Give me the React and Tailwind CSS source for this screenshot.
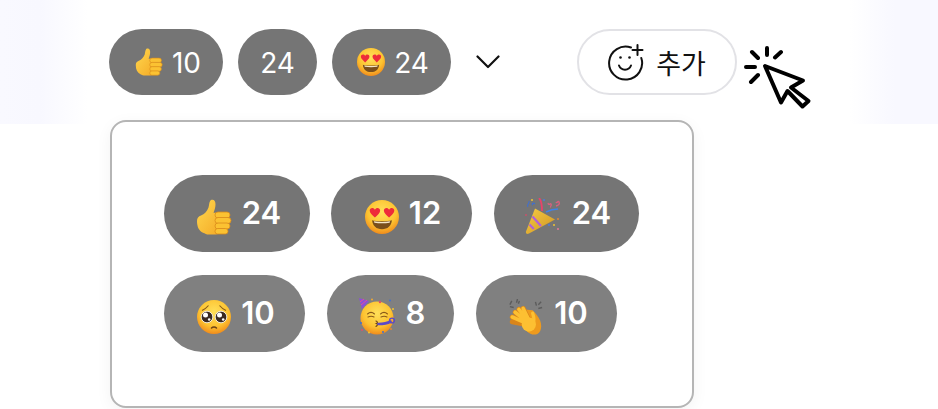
import React from "react";

function FaceGrad({ id }) {
  return (
    <radialGradient id={id} cx="50%" cy="35%" r="65%">
      <stop offset="0%" stopColor="#ffe05a" />
      <stop offset="65%" stopColor="#fdc331" />
      <stop offset="100%" stopColor="#f08c1c" />
    </radialGradient>
  );
}

function Thumb({ size }) {
  return (
    <svg width={size} height={size} viewBox="0 0 36 36">
      <defs>
        <linearGradient id="th" x1="0" y1="0" x2="1" y2="1">
          <stop offset="0%" stopColor="#ffd84f" />
          <stop offset="100%" stopColor="#f4a925" />
        </linearGradient>
      </defs>
      <path d="M1 22c0-3 1.500-4.500 4-5.500 3.500-1.500 6-4 7.500-8 .8-2.300.6-7 3-7.700 2.700-.6 4 1.500 4 4.500 0 3-1 6-2 8.500h6c2 0 3 1.700 2 3.500l-1 15c-.8 2.500-2.500 3.200-5 3.200H13c-2.500 0-4-1-6-1.800C3 32 1 28 1 22z" fill="url(#th)" />
      <rect x="19" y="13" width="15" height="6" rx="3" fill="#fbc232" stroke="#d98a1a" strokeWidth=".8" />
      <rect x="19" y="18.500" width="16" height="6" rx="3" fill="#fbc232" stroke="#d98a1a" strokeWidth=".8" />
      <rect x="19" y="24" width="15" height="6" rx="3" fill="#fbc232" stroke="#d98a1a" strokeWidth=".8" />
      <rect x="19" y="29.500" width="13" height="5.500" rx="2.700" fill="#fbc232" stroke="#d98a1a" strokeWidth=".8" />
    </svg>
  );
}

function Heart({ x, y, s }) {
  return (
    <path
      transform={`translate(${x} ${y}) scale(${s})`}
      d="M0 -3.500C-1.500 -6.500 -6 -6 -6 -2.300 -6 .5 -2.500 3 0 5.500 2.500 3 6 .5 6 -2.300 6 -6 1.500 -6.500 0 -3.500z"
      fill="#ee2b3a"
    />
  );
}

function HeartEyes({ size }) {
  return (
    <svg width={size} height={size} viewBox="0 0 36 36">
      <defs><FaceGrad id="he" /></defs>
      <circle cx="18" cy="18" r="18" fill="url(#he)" />
      <path d="M7.500 21.500C12 23 24 23 28.500 21.500 28 27.500 24 31 18 31S8 27.500 7.500 21.500z" fill="#7a4f1c" />
      <path d="M9.500 22.500c5 .9 12 .9 17 0l-.4 1.500c-5 .8-11 .8-16.200 0z" fill="#f4e6c8" />
      <Heart x={10.500} y={13.500} s={.92} />
      <Heart x={25.500} y={13.500} s={.92} />
    </svg>
  );
}

function Popper({ size }) {
  return (
    <svg width={size} height={size} viewBox="0 0 37 37" fill="none">
      <defs>
        <linearGradient id="po" x1="0" y1="0" x2="1" y2="1">
          <stop offset="0%" stopColor="#f6cc45" />
          <stop offset="100%" stopColor="#cf9421" />
        </linearGradient>
      </defs>
      <path d="M10 10.500 30 21.500 4 35.500C2 36.500.5 35.500 1 33.500z" fill="url(#po)" />
      <path d="M7.500 18.500 16 28M4.500 26.500 8.800 31" stroke="#b260d8" strokeWidth="2.200" />
      <path d="M3 9c-2-3 2-3 1-6M8 7c-2-1 0-3 2-1" stroke="#3f6fd1" strokeWidth="1.100" />
      <path d="M14 0c3 3 3 8 3 13" stroke="#e8436a" strokeWidth="1.800" />
      <path d="M23 5c1 3 2 0 3 1s-1 3 0 3M31 4c1 2 2-2 3 0s0 3-3 4" stroke="#d9607f" strokeWidth="1.400" />
      <path d="M21 14c4-2 7-3 12-3" stroke="#3f82e8" strokeWidth="1.600" />
      <circle cx="7" cy="2" r="1" fill="#f0c330" /><circle cx="19" cy="2" r="1" fill="#4a7ae0" />
      <circle cx="33" cy="21" r="1" fill="#e08a36" /><circle cx="29" cy="27" r="1" fill="#f0c330" />
      <circle cx="33" cy="31" r="1" fill="#e8789a" /><circle cx="24" cy="27" r="1" fill="#4a7ae0" />
      <circle cx="1" cy="17" r="1" fill="#c8506a" />
    </svg>
  );
}

function Pleading({ size }) {
  return (
    <svg width={size} height={size} viewBox="0 0 34 34">
      <defs><FaceGrad id="pl" /></defs>
      <circle cx="17" cy="17" r="17" fill="url(#pl)" />
      <path d="M5 10.500c2-1 4.500-2.500 6.500-5M29 10.500c-2-1-4.500-2.500-6.500-5" stroke="#8a5a18" strokeWidth="1.200" fill="none" />
      <circle cx="10" cy="17" r="5.800" fill="#3a2a22" stroke="#fff" strokeWidth=".8" />
      <circle cx="24" cy="17" r="5.800" fill="#3a2a22" stroke="#fff" strokeWidth=".8" />
      <circle cx="8.500" cy="15" r="2.500" fill="#fff" /><circle cx="22.500" cy="15" r="2.500" fill="#fff" />
      <circle cx="12.200" cy="19.500" r="1.300" fill="#fff" /><circle cx="26.200" cy="19.500" r="1.300" fill="#fff" />
      <path d="M14.500 28c1.300-1.200 3.700-1.200 5 0" stroke="#6e4415" strokeWidth="1.500" fill="none" strokeLinecap="round" />
    </svg>
  );
}

function Partying({ size }) {
  return (
    <svg width={size} height={size} viewBox="0 0 37 37" fill="none">
      <defs><FaceGrad id="pa" /></defs>
      <circle cx="18" cy="20" r="16.500" fill="url(#pa)" />
      <path d="M0 0 10 3 3 11z" fill="#8a4fd8" />
      <path d="M2 7 8 2M1 4 5 1" stroke="#e0509a" strokeWidth="1" />
      <path d="M8.500 16c2-1.800 5-1.800 7 0M21.500 16c2-1.800 5-1.800 7 0M9 19c1.800-.8 4.500-.8 6 0M22 19c1.800-.8 4.500-.8 6 0" stroke="#8a5a18" strokeWidth="1.100" strokeLinecap="round" />
      <path d="M17 23c1.500 .5 2 2 .5 2.500 1.500 .5 1 2.500-.5 2.800" stroke="#6e4415" strokeWidth="1.200" strokeLinecap="round" />
      <path d="M19.500 26c5 0 8.500-.5 12-2.500" stroke="#5b4ac8" strokeWidth="2.600" strokeLinecap="round" />
      <circle cx="33" cy="22.500" r="2.400" stroke="#5b4ac8" strokeWidth="1.400" />
      <circle cx="21" cy="4" r="1.200" fill="#e0506a" /><circle cx="13" cy="1.500" r="1" fill="#f0a830" />
      <circle cx="31" cy="2.500" r="1" fill="#3f6fd1" /><circle cx="34" cy="11" r="1" fill="#f0c330" />
      <circle cx="2" cy="25" r="1" fill="#3f6fd1" /><circle cx="3" cy="32" r="1" fill="#e0506a" />
      <circle cx="10" cy="34.500" r="1" fill="#f0c330" /><circle cx="24" cy="34" r="1" fill="#3f6fd1" />
      <circle cx="32" cy="31" r="1" fill="#e08a36" />
    </svg>
  );
}

function Clap({ size }) {
  return (
    <svg width={size} height={size} viewBox="0 0 36 38" fill="none">
      <path d="M3 2 1 6M9 0 8 4M11 2l-1 3M28 3l1 4M34 3l-3 3M35 9l-4 1M1 8l4 1" stroke="#5c5c5c" strokeWidth="1.500" />
      <path d="M16 11l9 1c3 3 6 7 8 11 2 6 1 12-3 14-4 1.500-8 0-11-3z" fill="#ee9a1c" />
      <g strokeLinecap="round">
        <path d="M24 28 15 10M24 28 10.500 11M24 28 6.500 14M24 28 3.500 19M24 28 3.500 24" stroke="#d9851a" strokeWidth="5.200" />
        <path d="M24 28 15 10M24 28 10.500 11M24 28 6.500 14M24 28 3.500 19" stroke="#fdc032" strokeWidth="3.800" />
      </g>
      <circle cx="21" cy="27" r="7.500" fill="#fdc032" />
      <path d="M25 15c1 3 2 6 1 9" stroke="#fdc032" strokeWidth="3.500" strokeLinecap="round" />
    </svg>
  );
}

function SmilePlus() {
  return (
    <svg width="37" height="37" viewBox="0 0 37 37" fill="none" stroke="#111" strokeWidth="2" strokeLinecap="round">
      <path d="M23 3.500A16.500 16.500 0 1 0 33.300 14" />
      <path d="M11 21.500c2 5.500 10 5.500 12 0" />
      <path d="M29.500 1v10M24.500 6h10" />
      <circle cx="12.500" cy="13.500" r="1.300" fill="#111" stroke="none" />
      <circle cx="21.500" cy="13.500" r="1.300" fill="#111" stroke="none" />
    </svg>
  );
}

function Cursor() {
  return (
    <svg width="76" height="68" viewBox="740 44 76 68" fill="none">
      <path d="M765 66 803 80.500 791 87.500 808.500 101 802.500 106.500 787.500 91 781 102.500z" fill="#fff" stroke="#000" strokeWidth="4" strokeLinejoin="round" />
      <path d="M767 48v7M781 52l-6 5.500M752 52l6 6M746 67h9M751 82l7-7" stroke="#000" strokeWidth="4" strokeLinecap="round" />
    </svg>
  );
}

function TopChip({ width, extra, children, count }) {
  return (
    <div className={`flex h-[66px] items-center justify-center rounded-full bg-[#757575] text-[28px] leading-none text-white ${width} ${extra}`}>
      {children}
      <span className="translate-y-[1px]">{count}</span>
    </div>
  );
}

function BigChip({ width, color, icon, count }) {
  return (
    <div className={`flex h-[77px] items-center justify-center gap-[10px] rounded-full pl-[3px] text-[31px] leading-none font-semibold text-white ${width} ${color}`}>
      <span className="translate-y-[3px]">{icon}</span>
      <span className="-translate-y-[1px]">{count}</span>
    </div>
  );
}

export default function App() {
  return (
    <div className="h-[409px] w-[938px] overflow-hidden bg-white font-['Inter',sans-serif]">
      <div className="flex h-[124px] items-start bg-[linear-gradient(to_right,#f9f9ff_0px,#f8f8ff_40px,#ffffff_88px,#ffffff_850px,#f8f8ff_895px,#f8f8ff_938px)] pt-[29px] pl-[109px]">
        <div className="flex gap-[15px]">
          <TopChip width="w-[114px]" extra="gap-[9px] pl-[4px]" count="10"><Thumb size={28} /></TopChip>
          <TopChip width="w-[79px]" extra="-translate-x-0" count="24" />
          <TopChip width="w-[119px]" extra="gap-[9px] pl-[3px]" count="24"><HeartEyes size={28} /></TopChip>
        </div>
        <svg className="mt-[26px] ml-[25px]" width="24" height="14" viewBox="0 0 24 14" fill="none" stroke="#111" strokeWidth="2.200" strokeLinecap="round" strokeLinejoin="round">
          <path d="M1.500 1.500 12 12 22.500 1.500" />
        </svg>
        <div className="relative ml-[77px]">
          <div className="flex h-[66px] w-[160px] items-center justify-center gap-[11px] rounded-full border-2 border-[#e2e2e6] bg-white text-[27px] text-[#111] font-['Noto_Sans_CJK_KR',sans-serif]">
            <SmilePlus />
            <span className="leading-none">추가</span>
          </div>
          <div className="absolute top-[15px] left-[163px]"><Cursor /></div>
        </div>
      </div>
      <div className="relative -mt-[4px] ml-[110px] h-[288px] w-[584px] rounded-[16px] border-2 border-[#b5b5b5] bg-white pt-[53px] pl-[52px] shadow-[0_4px_16px_rgba(0,0,0,0.05)]">
        <div className="flex gap-[22px]">
          <BigChip width="w-[146px]" color="bg-[#757575]" icon={<Thumb size={36} />} count="24" />
          <BigChip width="w-[141px]" color="bg-[#757575] -ml-[1px]" icon={<HeartEyes size={34} />} count="12" />
          <BigChip width="w-[145px]" color="bg-[#757575]" icon={<Popper size={37} />} count="24" />
        </div>
        <div className="mt-[23px] flex gap-[22px]">
          <BigChip width="w-[141px]" color="bg-[#808080]" icon={<Pleading size={34} />} count="10" />
          <BigChip width="w-[127px]" color="bg-[#808080]" icon={<Partying size={37} />} count="8" />
          <BigChip width="w-[141px]" color="bg-[#808080]" icon={<Clap size={36} />} count="10" />
        </div>
      </div>
    </div>
  );
}
